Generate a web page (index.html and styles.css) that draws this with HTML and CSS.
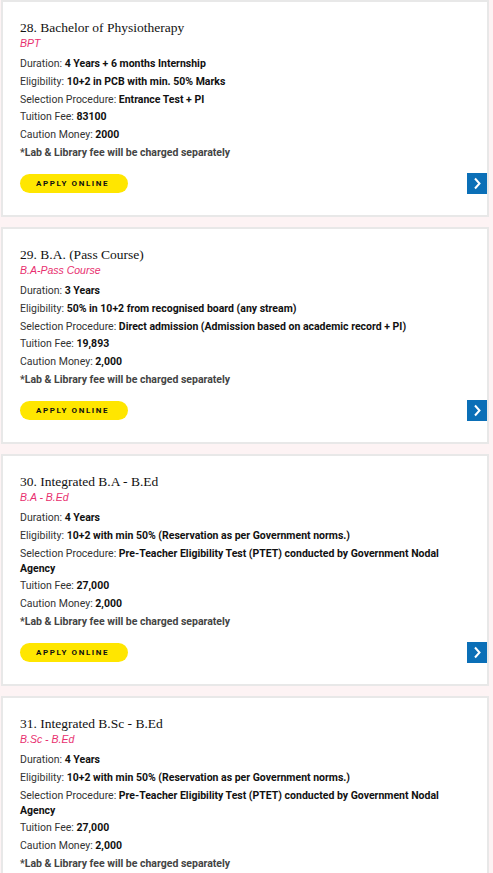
FILE: index.html
```html
<!DOCTYPE html>
<html lang="en">
<head>
<meta charset="utf-8">
<title>Courses</title>
<link rel="stylesheet" href="styles.css">
</head>
<body>
<div class="list">
  <div class="card">
    <h3 class="title">28. Bachelor of Physiotherapy</h3>
    <div class="abbr">BPT</div>
    <div class="details">
      <p>Duration: <b>4 Years + 6 months Internship</b></p>
      <p>Eligibility: <b>10+2 in PCB with min. 50% Marks</b></p>
      <p>Selection Procedure: <b>Entrance Test + PI</b></p>
      <p>Tuition Fee: <b>83100</b></p>
      <p>Caution Money: <b>2000</b></p>
      <p class="note">*Lab &amp; Library fee will be charged separately</p>
    </div>
    <div class="foot">
      <a class="apply">APPLY ONLINE</a>
      <a class="arrow"><svg viewBox="0 0 20 21" width="20" height="21"><path d="M8 5.5 L12.5 10.5 L8 15.5" fill="none" stroke="#fff" stroke-width="2"/></svg></a>
    </div>
  </div>

  <div class="card">
    <h3 class="title">29. B.A. (Pass Course)</h3>
    <div class="abbr">B.A-Pass Course</div>
    <div class="details">
      <p>Duration: <b>3 Years</b></p>
      <p>Eligibility: <b>50% in 10+2 from recognised board (any stream)</b></p>
      <p>Selection Procedure: <b>Direct admission (Admission based on academic record + PI)</b></p>
      <p>Tuition Fee: <b>19,893</b></p>
      <p>Caution Money: <b>2,000</b></p>
      <p class="note">*Lab &amp; Library fee will be charged separately</p>
    </div>
    <div class="foot">
      <a class="apply">APPLY ONLINE</a>
      <a class="arrow"><svg viewBox="0 0 20 21" width="20" height="21"><path d="M8 5.5 L12.5 10.5 L8 15.5" fill="none" stroke="#fff" stroke-width="2"/></svg></a>
    </div>
  </div>

  <div class="card">
    <h3 class="title">30. Integrated B.A - B.Ed</h3>
    <div class="abbr">B.A - B.Ed</div>
    <div class="details">
      <p>Duration: <b>4 Years</b></p>
      <p>Eligibility: <b>10+2 with min 50% (Reservation as per Government norms.)</b></p>
      <p>Selection Procedure: <b>Pre-Teacher Eligibility Test (PTET) conducted by Government Nodal Agency</b></p>
      <p>Tuition Fee: <b>27,000</b></p>
      <p>Caution Money: <b>2,000</b></p>
      <p class="note">*Lab &amp; Library fee will be charged separately</p>
    </div>
    <div class="foot">
      <a class="apply">APPLY ONLINE</a>
      <a class="arrow"><svg viewBox="0 0 20 21" width="20" height="21"><path d="M8 5.5 L12.5 10.5 L8 15.5" fill="none" stroke="#fff" stroke-width="2"/></svg></a>
    </div>
  </div>

  <div class="card">
    <h3 class="title">31. Integrated B.Sc - B.Ed</h3>
    <div class="abbr">B.Sc - B.Ed</div>
    <div class="details">
      <p>Duration: <b>4 Years</b></p>
      <p>Eligibility: <b>10+2 with min 50% (Reservation as per Government norms.)</b></p>
      <p>Selection Procedure: <b>Pre-Teacher Eligibility Test (PTET) conducted by Government Nodal Agency</b></p>
      <p>Tuition Fee: <b>27,000</b></p>
      <p>Caution Money: <b>2,000</b></p>
      <p class="note">*Lab &amp; Library fee will be charged separately</p>
    </div>
    <div class="foot">
      <a class="apply">APPLY ONLINE</a>
      <a class="arrow"><svg viewBox="0 0 20 21" width="20" height="21"><path d="M8 5.5 L12.5 10.5 L8 15.5" fill="none" stroke="#fff" stroke-width="2"/></svg></a>
    </div>
  </div>
</div>
</body>
</html>
```

FILE: styles.css
```css
html, body {
  margin: 0;
  padding: 0;
  background: #fdf3f4;
}
.list {
  display: flex;
  flex-direction: column;
  gap: 10px;
  padding: 0 4px 0 1px;
}
.card {
  background: #fff;
  border: 2px solid #e8e8e8;
  padding: 17px 0 21px 17px;
}
.title {
  margin: 0;
  font-family: "Liberation Serif", "Times New Roman", serif;
  font-weight: normal;
  font-size: 13.5px;
  line-height: 18px;
  color: #111;
}
.abbr {
  font-family: "Liberation Sans", Arial, sans-serif;
  font-style: italic;
  font-size: 10.5px;
  line-height: 13px;
  color: #e8306f;
  margin-bottom: 6px;
}
.details {
  padding-right: 17px;
  font-family: Roboto, "Liberation Sans", Arial, sans-serif;
  font-size: 10.5px;
  line-height: 15px;
  color: #333;
}
.details p {
  margin: 0 0 2.8px;
}
.details b {
  font-weight: bold;
  color: #111;
}
.details .note {
  font-weight: bold;
  color: #444;
}
.foot {
  display: flex;
  justify-content: space-between;
  align-items: center;
  margin-top: 13px;
}
.apply {
  display: flex;
  align-items: center;
  box-sizing: border-box;
  width: 108px;
  height: 19px;
  padding-left: 16px;
  border-radius: 10px;
  background: #ffe600;
  font-family: Roboto, "Liberation Sans", Arial, sans-serif;
  font-weight: bold;
  font-size: 8px;
  letter-spacing: 1.6px;
  color: #111;
}
.arrow {
  display: block;
  width: 20px;
  height: 21px;
  background: #0b6fb7;
}
.arrow svg {
  display: block;
}
```
